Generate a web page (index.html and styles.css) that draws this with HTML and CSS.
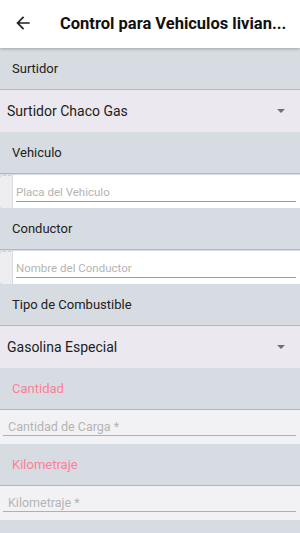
FILE: index.html
```html
<!DOCTYPE html>
<html lang="es">
<head>
    <meta charset="UTF-8">
    <meta name="viewport" content="width=device-width, initial-scale=1.0">
    <title>Control para Vehiculos livianos</title>
    <link rel="stylesheet" href="styles.css">
</head>
<body>
    <div class="screen">
        <div class="top-bar">
            <svg class="back-icon" viewBox="0 0 24 24" width="20" height="20">
                <path d="M20 11H7.83l5.59-5.59L12 4l-8 8 8 8 1.41-1.41L7.83 13H20v-2z" fill="#212121"/>
            </svg>
            <div class="title">Control para Vehiculos livian...</div>
        </div>

        <div class="form">
            <div class="section-label">Surtidor</div>
            <div class="select-row">
                <span>Surtidor Chaco Gas</span>
                <span class="caret"></span>
            </div>

            <div class="section-label">Vehiculo</div>
            <div class="boxed-row">
                <div class="side-tab"></div>
                <div class="boxed-input">
                    <input type="text" placeholder="Placa del Vehiculo">
                </div>
            </div>

            <div class="section-label">Conductor</div>
            <div class="boxed-row">
                <div class="side-tab"></div>
                <div class="boxed-input">
                    <input type="text" placeholder="Nombre del Conductor">
                </div>
            </div>

            <div class="section-label">Tipo de Combustible</div>
            <div class="select-row">
                <span>Gasolina Especial</span>
                <span class="caret"></span>
            </div>

            <div class="section-label required">Cantidad</div>
            <div class="plain-row">
                <input type="text" placeholder="Cantidad de Carga *">
            </div>

            <div class="section-label required">Kilometraje</div>
            <div class="plain-row">
                <input type="text" placeholder="Kilometraje *">
            </div>

            <div class="section-label"></div>
        </div>
    </div>
</body>
</html>
```

FILE: styles.css
```css
* {
    margin: 0;
    padding: 0;
    box-sizing: border-box;
}

body {
    font-family: Roboto, 'Noto Sans', Arial, sans-serif;
    background-color: #d6dce2;
    color: #212121;
}

.screen {
    height: 100vh;
    overflow: hidden;
}

/* Top bar */
.top-bar {
    height: 48px;
    background-color: #fff;
    display: flex;
    align-items: center;
    padding: 0 8px 2px 13px;
    box-shadow: 0 1px 3px rgba(0, 0, 0, 0.25);
    position: relative;
    z-index: 2;
}

.back-icon {
    flex-shrink: 0;
}

.title {
    margin-left: 27px;
    font-size: 16.5px;
    font-weight: bold;
    color: #111;
    white-space: nowrap;
}

/* Section headers */
.section-label {
    height: 42px;
    display: flex;
    align-items: center;
    padding-left: 12px;
    font-size: 13px;
    background-color: #d6dce2;
    border-bottom: 1px solid #b4b9be;
}

.section-label.required {
    color: #ff8096;
}

/* Dropdowns */
.select-row {
    height: 42px;
    display: flex;
    align-items: center;
    justify-content: space-between;
    padding: 0 15px 0 7px;
    font-size: 14px;
    background-color: #ebe9ef;
}

.caret {
    width: 0;
    height: 0;
    border-left: 4.5px solid transparent;
    border-right: 4.5px solid transparent;
    border-top: 4.5px solid #707070;
}

/* Inputs with white box */
.boxed-row {
    height: 34px;
    display: flex;
    padding-top: 1px;
    background-color: #d6dce2;
}

.side-tab {
    width: 12px;
    background-color: #eeeef1;
    border-radius: 3px 0 0 3px;
    border-top: 1px dashed #d0d0d4;
    margin-right: 1px;
}

.boxed-input {
    flex: 1;
    background-color: #fff;
    padding: 4px 4px 0 3px;
}

.boxed-input input {
    width: 100%;
    height: 23px;
    border: none;
    border-bottom: 1px solid #9a9a9a;
    outline: none;
    background: transparent;
    font-family: inherit;
    font-size: 11.5px;
    padding-top: 3px;
}

/* Plain inputs */
.plain-row {
    height: 34px;
    background-color: #f2f2f4;
    padding: 4px 4px 0 3px;
}

.plain-row input {
    width: 100%;
    height: 22px;
    border: none;
    border-bottom: 1px solid #b0b0b0;
    outline: none;
    background: transparent;
    font-family: inherit;
    font-size: 12.5px;
    padding: 3px 0 0 5px;
}

input::placeholder {
    color: #b4b4b4;
}
```
